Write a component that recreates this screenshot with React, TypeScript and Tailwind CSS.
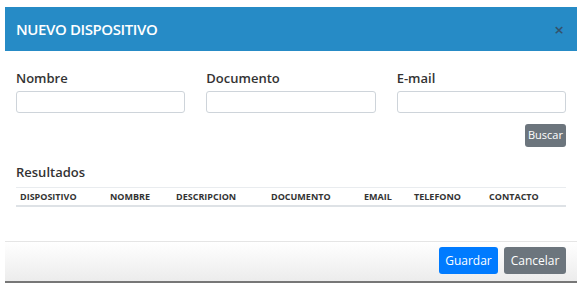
import React from 'react';

const columns = ['DISPOSITIVO', 'NOMBRE', 'DESCRIPCION', 'DOCUMENTO', 'EMAIL', 'TELEFONO', 'CONTACTO'];
const colWidths = ['w-[90px]', 'w-[66px]', 'w-[95px]', 'w-[93px]', 'w-[50px]', 'w-[75px]', 'flex-1'];

export default function App() {
  return (
    <div className="w-[585px] h-[287px] bg-white pt-[7px] pl-[5px] font-['Open_Sans',sans-serif] text-[#212529]">
      <div className="w-[572px]">
        {/* Header */}
        <div className="h-[44px] bg-[#268bc6] flex items-center justify-between pl-[11px] pr-[13px]">
          <h1 className="text-white text-[15px] font-semibold tracking-[-0.4px]">NUEVO DISPOSITIVO</h1>
          <span className="text-[#34526b] text-[17px] font-semibold leading-none">×</span>
        </div>

        {/* Body */}
        <div className="h-[190px] px-[11px] pt-[19px] flex flex-col">
          <div className="grid grid-cols-3 gap-[21px]">
            {['Nombre', 'Documento', 'E-mail'].map((label) => (
              <div key={label} className="flex flex-col">
                <label className="text-[13px] leading-4 font-semibold text-[#333] mb-[5px]">{label}</label>
                <input className="h-[22px] border border-[#ced4da] rounded-[3px] bg-white" />
              </div>
            ))}
          </div>
          <div className="flex justify-end mt-[11px]">
            <button className="h-[23px] w-[41px] bg-[#6c757d] text-white text-[11px] rounded-[3px] flex items-center justify-center">Buscar</button>
          </div>
          <h2 className="mt-[17px] text-[13px] leading-4 font-semibold text-[#333]">Resultados</h2>
          <div className="mt-[7px] border-t border-[#e9ecef] border-b-2 border-b-[#dee2e6] h-[20px] flex items-center pl-[4px]">
            {columns.map((c, i) => (
              <div key={c} className={`${colWidths[i]} text-[9px] font-bold text-[#333]`}>{c}</div>
            ))}
          </div>
        </div>

        {/* Footer */}
        <div className="h-[42px] border-t border-[#e5e5e5] border-b-2 border-b-[#777] bg-gradient-to-b from-white to-[#ececec] flex items-start justify-end gap-[6px] pt-[5px] pr-[11px]">
          <button className="h-[27px] w-[59px] bg-[#007bff] text-white text-[12px] rounded-[3px]">Guardar</button>
          <button className="h-[27px] w-[62px] bg-[#6c757d] text-white text-[12px] rounded-[3px]">Cancelar</button>
        </div>
      </div>
    </div>
  );
}
